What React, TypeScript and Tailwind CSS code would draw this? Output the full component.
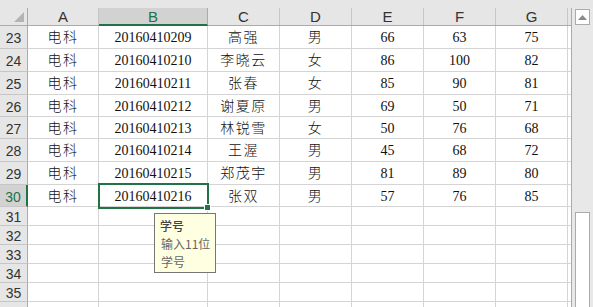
import React from "react";

const cols = [
  { k: "A", w: "w-[71px]" },
  { k: "B", w: "w-[109px]" },
  { k: "C", w: "w-[72px]" },
  { k: "D", w: "w-[72px]" },
  { k: "E", w: "w-[72px]" },
  { k: "F", w: "w-[72px]" },
  { k: "G", w: "w-[72px]" },
];

const data: { n: string; h: string; v: string[] }[] = [
  { n: "23", h: "h-[23px]", v: ["电科", "20160410209", "高强", "男", "66", "63", "75"] },
  { n: "24", h: "h-[23px]", v: ["电科", "20160410210", "李晓云", "女", "86", "100", "82"] },
  { n: "25", h: "h-[23px]", v: ["电科", "20160410211", "张春", "女", "85", "90", "81"] },
  { n: "26", h: "h-[22px]", v: ["电科", "20160410212", "谢夏原", "男", "69", "50", "71"] },
  { n: "27", h: "h-[22px]", v: ["电科", "20160410213", "林锐雪", "女", "50", "76", "68"] },
  { n: "28", h: "h-[23px]", v: ["电科", "20160410214", "王渥", "男", "45", "68", "72"] },
  { n: "29", h: "h-[23px]", v: ["电科", "20160410215", "郑茂宇", "男", "81", "89", "80"] },
  { n: "30", h: "h-[22px]", v: ["电科", "20160410216", "张双", "男", "57", "76", "85"] },
  { n: "31", h: "h-[19px]", v: ["", "", "", "", "", "", ""] },
  { n: "32", h: "h-[19px]", v: ["", "", "", "", "", "", ""] },
  { n: "33", h: "h-[19px]", v: ["", "", "", "", "", "", ""] },
  { n: "34", h: "h-[19px]", v: ["", "", "", "", "", "", ""] },
  { n: "35", h: "h-[19px]", v: ["", "", "", "", "", "", ""] },
  { n: "", h: "h-[19px]", v: ["", "", "", "", "", "", ""] },
];

const sans = "font-['Liberation_Sans',Arial,sans-serif]";
const cjk = "font-['Liberation_Serif','Noto_Sans_CJK_SC',serif]";

export default function App() {
  return (
    <div className="relative w-[593px] h-[307px] overflow-hidden bg-[#e6e6e6] flex flex-col">
      <div className="h-[8px] shrink-0" />
      <div className="flex flex-1 min-h-0">
        <div className="w-[571px] flex flex-col bg-white">
          {/* header row */}
          <div className="flex h-[18px] shrink-0 bg-[#e6e6e6] border-b border-[#ababab]">
            <div className="w-[28px] shrink-0 border-r border-[#ababab] relative">
              <svg width="28" height="17" className="absolute left-0 top-0">
                <polygon points="24,4 24,14 14,14" fill="#b4b4b4" />
              </svg>
            </div>
            {cols.map((c) =>
              c.k === "B" ? (
                <div
                  key={c.k}
                  className={`${c.w} shrink-0 bg-[#d2d2d2] border-r border-[#ababab] border-b-2 border-b-[#217346] -mb-[1px] flex items-center justify-center text-[15px] leading-none text-[#217346] ${sans}`}
                >
                  {c.k}
                </div>
              ) : (
                <div
                  key={c.k}
                  className={`${c.w} shrink-0 border-r border-[#c6c6c6] flex items-center justify-center text-[15px] leading-none text-[#333] ${sans}`}
                >
                  {c.k}
                </div>
              )
            )}
            <div className="flex-1" />
          </div>
          {/* body rows */}
          {data.map((r, idx) => {
            const sel = r.n === "30";
            return (
              <div key={idx} className={`flex ${r.h} shrink-0`}>
                <div
                  className={`w-[28px] shrink-0 border-b border-[#c6c6c6] flex items-center justify-center text-[14px] leading-none pt-[2px] ${sans} ${
                    sel
                      ? "bg-[#d2d2d2] text-[#217346] border-r-2 border-r-[#217346]"
                      : "bg-[#e6e6e6] text-[#333] border-r border-r-[#ababab]"
                  }`}
                >
                  {r.n}
                </div>
                {cols.map((c, i) => (
                  <div
                    key={c.k}
                    className={`${c.w} shrink-0 border-r border-b border-[#d4d4d4] flex items-center justify-center text-[14px] leading-none pt-[2px] text-[#111] font-light ${i === 0 || i === 2 || i === 3 ? "tracking-[1.5px]" : ""} ${cjk}`}
                  >
                    {r.v[i]}
                  </div>
                ))}
                <div className="flex-1 border-b border-[#d4d4d4]" />
              </div>
            );
          })}
        </div>
        {/* scrollbar */}
        <div className="w-[22px] shrink-0 border-l border-[#ababab] bg-[#e8e8e8] flex flex-col px-[3px] pt-[1px]">
          <div className="h-[16px] w-[15px] shrink-0 bg-white border border-[#ababab] flex items-center justify-center">
            <svg width="9" height="5">
              <polygon points="0,5 4.5,0 9,5" fill="#8a8a8a" />
            </svg>
          </div>
          <div className="h-[187px] shrink-0" />
          <div className="flex-1 w-[15px] bg-white border border-b-0 border-[#ababab]" />
        </div>
      </div>

      {/* selected cell overlay */}
      <div className="absolute left-[98px] top-[183px] w-[111px] h-[26px] border-2 border-[#217346]" />
      <div className="absolute left-[204px] top-[204px] w-[7px] h-[7px] bg-[#217346] border border-white" />

      {/* input message tooltip */}
      <div className="absolute left-[154px] top-[213px] w-[62px] h-[60px] bg-[#ffffe1] border border-[#767676] pl-[5px] pt-[3px] font-['Noto_Sans_CJK_SC',sans-serif] text-[12px] leading-[18px]">
        <div className="font-medium text-[#444]">学号</div>
        <div className="text-[#666] pl-[1px]">输入11位</div>
        <div className="text-[#666] pl-[1px]">学号</div>
      </div>
    </div>
  );
}
